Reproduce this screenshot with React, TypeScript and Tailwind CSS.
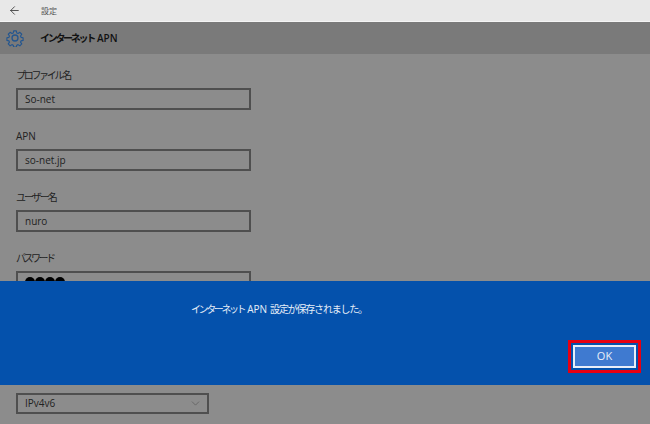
import { ArrowLeft, ChevronDown } from 'lucide-react';

const fields = [
  { label: 'プロファイル名', value: 'So-net', tracking: 'tracking-[-2.3px]' },
  { label: 'APN', value: 'so-net.jp', tracking: 'tracking-normal' },
  { label: 'ユーザー名', value: 'nuro', tracking: 'tracking-[-2px]' },
];

function Gear() {
  return (
    <svg width="18" height="18" viewBox="0 0 24 24" fill="none" stroke="#24568f" strokeWidth="1.7" strokeLinejoin="round">
      <path d="M10 1.5h4l.6 3.1 1.9.8 2.7-1.8 2.8 2.8-1.8 2.7.8 1.9 3 .6v4l-3 .6-.8 1.9 1.8 2.7-2.8 2.8-2.7-1.8-1.9.8-.6 3h-4l-.6-3-1.9-.8-2.7 1.8-2.8-2.8 1.8-2.7-.8-1.9-3-.6v-4l3-.6.8-1.9-1.8-2.7 2.8-2.8 2.7 1.8 1.9-.8z" transform="translate(1.2 1.2) scale(0.9)" />
      <circle cx="12" cy="12" r="4" />
    </svg>
  );
}

export default function App() {
  return (
    <div className="relative w-[650px] h-[424px] overflow-hidden bg-[#8c8c8c] text-[#1c1c1c] font-['Open_Sans','Noto_Sans_CJK_JP',sans-serif]">
      {/* Title bar */}
      <div className="flex items-center h-[22px] bg-[#e8e8e8] border-b border-[#f4f4f4]">
        <div className="w-[41px] pl-[8px]">
          <ArrowLeft size={13} strokeWidth={1.5} className="text-[#333]" />
        </div>
        <span className="text-[8px] text-[#555]">設定</span>
      </div>

      {/* Page header */}
      <div className="flex items-center h-[32px] bg-[#7a7a7a]">
        <div className="w-[40px] pl-[6px]">
          <Gear />
        </div>
        <span className="text-[10px] font-semibold text-[#111] flex gap-[3px]">
          <span className="tracking-[-2.3px]">インターネット</span>
          <span>APN</span>
        </span>
      </div>

      {/* Form */}
      <div className="px-4 pt-[14px]">
        {fields.map((f) => (
          <div key={f.label} className="h-[61px]">
            <div className={`text-[10px] h-[20px] leading-[14px] text-[#222] ${f.tracking}`}>{f.label}</div>
            <div className="flex items-center w-[235px] h-[22px] px-[7px] border-2 border-[#4f4f4f] text-[10px] text-[#222]">
              {f.value}
            </div>
          </div>
        ))}
        <div className="text-[10px] h-[20px] leading-[14px] text-[#222] tracking-[-2.5px]">パスワード</div>
        <div className="flex items-center w-[235px] h-[22px] px-[7px] border-2 border-[#4f4f4f]">
          {[0, 1, 2, 3].map((i) => (
            <span key={i} className="w-[10px] h-[10px] rounded-full bg-black" />
          ))}
        </div>
      </div>

      {/* Protocol select, below the dialog */}
      <div className="absolute left-4 top-[393px] flex items-center justify-between w-[193px] h-[21px] pl-[7px] pr-[5px] border-2 border-[#4f4f4f] text-[10px] text-[#222]">
        IPv4v6
        <ChevronDown size={13} strokeWidth={1.2} className="text-[#555]" />
      </div>

      {/* Dialog */}
      <div className="absolute left-0 right-0 top-[281px] h-[104px] bg-[#0451ac] flex flex-col">
        <p className="mt-[21px] ml-[191px] flex gap-[3px] text-[10px] leading-[14px] text-[#e6eef8]">
          <span className="tracking-[-2.4px]">インターネット</span>
          <span>APN</span>
          <span className="tracking-[-1.2px]">設定が保存されました。</span>
        </p>
        <div className="mt-auto mb-[12px] mr-[9px] self-end border-[3px] border-[#e60012] p-[2px]">
          <div className="flex items-center justify-center w-[63px] h-[23px] bg-[#3f7ad0] border-2 border-[#e8eef8] text-[11px] font-medium text-[#e8eef8]">
            OK
          </div>
        </div>
      </div>
    </div>
  );
}
